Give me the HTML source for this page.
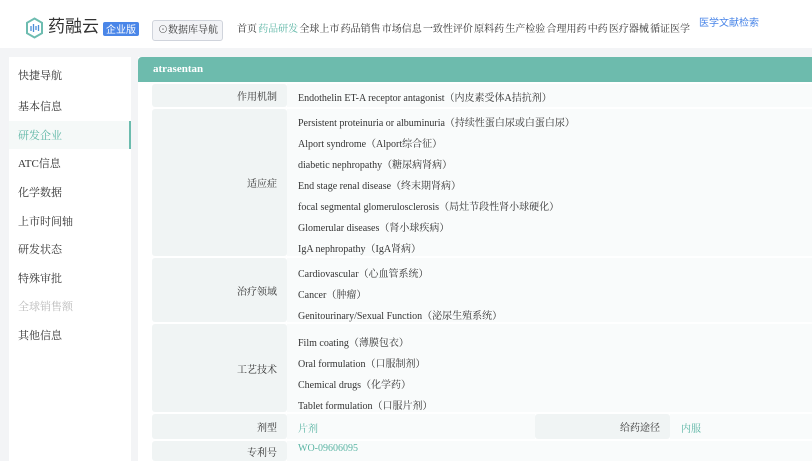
<!DOCTYPE html>
<html><head><meta charset="utf-8"><style>
*{margin:0;padding:0;box-sizing:border-box}
body{width:812px;height:468px;overflow:hidden;background:#fff;font-family:"Liberation Serif","Noto Serif CJK SC",serif;font-size:10px;color:#333;position:relative}
.a{position:absolute;white-space:nowrap}
.nav span{margin-right:1.2px}
.side div{position:absolute;left:18px;font-size:11px;color:#333}
.lab{position:absolute;left:152px;width:135px;background:#f0f4f4;border-radius:3px;text-align:right;padding-right:10px;display:flex;align-items:center;justify-content:flex-end}
.val{position:absolute;left:287px;right:0;background:#f9fbfb}
.val p{position:absolute;left:11px}
</style></head><body>
<svg class="a" style="left:25px;top:17px" width="19" height="22" viewBox="0 0 19 22"><path d="M9.5 1.5 L17 5.8 V16.2 L9.5 20.5 L2 16.2 V5.8 Z" fill="none" stroke="#6dbcb0" stroke-width="2"/><g stroke="#4a8fd8" stroke-width="1.3"><line x1="6" y1="9" x2="6" y2="14"/><line x1="8.5" y1="7" x2="8.5" y2="15"/><line x1="11" y1="9" x2="11" y2="13"/><line x1="13.5" y1="8" x2="13.5" y2="14"/></g></svg>
<div class="a" style="left:48px;top:15px;font-family:'Liberation Sans','Noto Sans CJK SC',sans-serif;font-size:17px;line-height:24px;color:#333">药融云</div>
<div class="a" style="left:103px;top:22px;height:14px;padding:0 3px;background:#4a86e8;color:#fff;border-radius:2px;font-family:'Noto Sans CJK SC',sans-serif;font-size:10px;line-height:14px">企业版</div>
<div class="a" style="left:152px;top:20px;width:71px;height:21px;border:1px solid #d0d4dc;border-radius:3px;background:#f3f4f7;font-size:10px;line-height:19px;padding-left:5px">⊙数据库导航</div>
<div class="a nav" style="left:237px;top:23px;font-size:10px;line-height:14px;color:#333"><span>首页</span><span style="color:#5bb5a4">药品研发</span><span>全球上市</span><span>药品销售</span><span>市场信息</span><span>一致性评价</span><span>原料药</span><span>生产检验</span><span>合理用药</span><span>中药</span><span>医疗器械</span><span>循证医学</span></div>
<div class="a" style="left:699px;top:15px;font-size:10px;line-height:14px;color:#4a86e8;font-family:'Noto Sans CJK SC',sans-serif">医学文献检索</div>
<div class="a" style="left:0;top:48px;width:812px;height:413px;background:#f3f4f6"></div>
<div class="a" style="left:9px;top:57px;width:122px;height:404px;background:#fff"></div>
<div class="a" style="left:9px;top:121px;width:122px;height:28px;background:#f5f9f8;border-right:2px solid #6cbcae"></div>
<div class="side">
<div style="top:67px">快捷导航</div>
<div style="top:98px">基本信息</div>
<div style="top:127px;color:#5bb5a4">研发企业</div>
<div style="top:155px">ATC信息</div>
<div style="top:184px">化学数据</div>
<div style="top:213px">上市时间轴</div>
<div style="top:241px">研发状态</div>
<div style="top:270px">特殊审批</div>
<div style="top:298px;color:#bbb">全球销售额</div>
<div style="top:327px">其他信息</div>
</div>
<div class="a" style="left:138px;top:57px;width:674px;height:404px;background:#fff"></div>
<div class="a" style="left:138px;top:57px;width:674px;height:25px;background:#6dbbad;border-radius:4px 0 0 0;color:#fff;font-weight:bold;font-size:11px;line-height:24px;padding-left:15px">atrasentan</div>
<div class="lab" style="top:84px;height:23px">作用机制</div>
<div class="val" style="top:84px;height:23px"><p style="top:5px">Endothelin ET-A receptor antagonist（内皮素受体A拮抗剂）</p></div>
<div class="lab" style="top:109px;height:147px">适应症</div>
<div class="val" style="top:109px;height:147px">
<p style="top:5px">Persistent proteinuria or albuminuria（持续性蛋白尿或白蛋白尿）</p>
<p style="top:26px">Alport syndrome（Alport综合征）</p>
<p style="top:47px">diabetic nephropathy（糖尿病肾病）</p>
<p style="top:68px">End stage renal disease（终末期肾病）</p>
<p style="top:89px">focal segmental glomerulosclerosis（局灶节段性肾小球硬化）</p>
<p style="top:110px">Glomerular diseases（肾小球疾病）</p>
<p style="top:131px">IgA nephropathy（IgA肾病）</p></div>
<div class="lab" style="top:258px;height:64px">治疗领域</div>
<div class="val" style="top:258px;height:64px">
<p style="top:7px">Cardiovascular（心血管系统）</p>
<p style="top:28px">Cancer（肿瘤）</p>
<p style="top:49px">Genitourinary/Sexual Function（泌尿生殖系统）</p></div>
<div class="lab" style="top:324px;height:88px">工艺技术</div>
<div class="val" style="top:324px;height:88px">
<p style="top:10px">Film coating（薄膜包衣）</p>
<p style="top:31px">Oral formulation（口服制剂）</p>
<p style="top:52px">Chemical drugs（化学药）</p>
<p style="top:73px">Tablet formulation（口服片剂）</p></div>
<div class="lab" style="top:414px;height:25px">剂型</div>
<div class="val" style="top:414px;height:25px;right:277px"><p style="top:6px;color:#5bb5a4">片剂</p></div>
<div class="lab" style="top:414px;height:25px;left:535px;width:135px">给药途径</div>
<div class="val" style="top:414px;height:25px;left:670px"><p style="top:6px;color:#5bb5a4">内服</p></div>
<div class="lab" style="top:441px;height:20px">专利号</div>
<div class="val" style="top:441px;height:20px"><p style="top:2px;color:#5bb5a4">WO-09606095</p></div>
<div class="a" style="left:0;top:461px;width:812px;height:7px;background:#fff"></div>
</body></html>
